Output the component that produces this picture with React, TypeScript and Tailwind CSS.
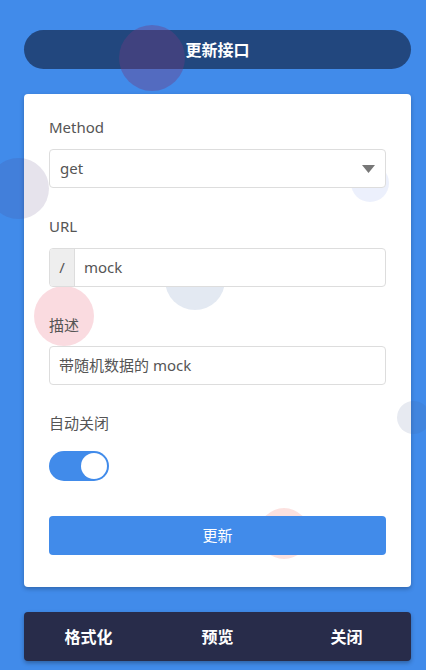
import React from "react";

const font = {
  fontFamily: '"Noto Sans", "Noto Sans CJK SC", sans-serif',
};

const bubbles = [
  { key: "b1", className: "left-[119px] top-[25px] w-[66px] h-[66px] bg-[rgba(110,60,130,0.4)] z-30" },
  { key: "b2", className: "left-[-12px] top-[158px] w-[61px] h-[61px] bg-[rgba(80,60,120,0.14)] z-10" },
  { key: "b3", className: "left-[351px] top-[164px] w-[38px] h-[38px] bg-[rgba(65,110,230,0.1)] z-10" },
  { key: "b4", className: "left-[165px] top-[250px] w-[60px] h-[60px] bg-[rgba(60,100,160,0.14)] z-10" },
  { key: "b5", className: "left-[34px] top-[286px] w-[60px] h-[60px] bg-[rgba(235,110,130,0.25)] z-10" },
  { key: "b6", className: "left-[397px] top-[401px] w-[33px] h-[33px] bg-[rgba(70,90,150,0.13)] z-10" },
  { key: "b7", className: "left-[259px] top-[508px] w-[50px] h-[51px] bg-[rgba(240,120,110,0.22)] z-10" },
];

const App = () => {
  return (
    <div
      className="relative w-full min-h-screen h-[670px] overflow-hidden bg-[#418bea] pl-6 pr-[15px] pt-[30px]"
      style={font}
    >
      {/* bulles décoratives */}
      {bubbles.map((b) => (
        <div key={b.key} className={`absolute rounded-full pointer-events-none ${b.className}`} />
      ))}

      {/* En-tête */}
      <div className="relative z-20 h-[39px] rounded-full bg-[#22477e] flex items-center justify-center">
        <span className="text-white font-bold text-[16px]">更新接口</span>
      </div>

      {/* Formulaire */}
      <div className="relative mt-[25px] h-[493px] rounded bg-white px-[25px] pt-[23px] shadow-[0_2px_4px_rgba(0,0,0,0.25)]">
        <div className="relative z-20 text-[15px] leading-[20px] text-[#555]">Method</div>
        <div className="relative z-20 mt-3 h-[39px] rounded border border-[#ddd] bg-white flex items-center justify-between pl-[10px] pr-[10px]">
          <span className="text-[15px] text-[#555]">get</span>
          <svg width="13" height="8" viewBox="0 0 13 8">
            <path d="M0 0 L13 0 L6.5 8 Z" fill="#777" />
          </svg>
        </div>

        <div className="relative z-20 mt-[28px] text-[15px] leading-[20px] text-[#555]">URL</div>
        <div className="relative z-20 mt-3 h-[39px] rounded border border-[#ddd] bg-white flex overflow-hidden">
          <div className="w-[25px] bg-[#eee] border-r border-[#ddd] flex items-center justify-center text-[15px] text-[#555]">
            /
          </div>
          <div className="flex items-center pl-[9px] text-[15px] text-[#555]">mock</div>
        </div>

        <div className="relative z-20 mt-[28px] text-[15px] leading-[20px] text-[#555]">描述</div>
        <div className="relative z-20 mt-[11px] h-[39px] rounded border border-[#ddd] bg-white flex items-center pl-[9px] text-[15px] text-[#555]">
          带随机数据的 mock
        </div>

        <div className="relative z-20 mt-[28px] text-[15px] leading-[20px] text-[#555]">自动关闭</div>
        <div className="relative z-20 mt-[18px] w-[60px] h-[30px] rounded-full bg-[#418bea] flex items-center justify-end pr-[2px]">
          <div className="w-[26px] h-[26px] rounded-full bg-white" />
        </div>

        <div className="relative z-20 mt-[35px] h-[39px] rounded bg-[#418bea] flex items-center justify-center text-white text-[15px]">
          更新
        </div>
      </div>

      {/* Barre d'actions */}
      <div className="relative z-20 mt-[25px] h-[49px] rounded bg-[#282c4a] grid grid-cols-3 shadow-[0_2px_4px_rgba(0,0,0,0.3)]">
        {["格式化", "预览", "关闭"].map((label) => (
          <div key={label} className="flex items-center justify-center text-white text-[16px] font-bold">
            {label}
          </div>
        ))}
      </div>
    </div>
  );
};

export default App;
